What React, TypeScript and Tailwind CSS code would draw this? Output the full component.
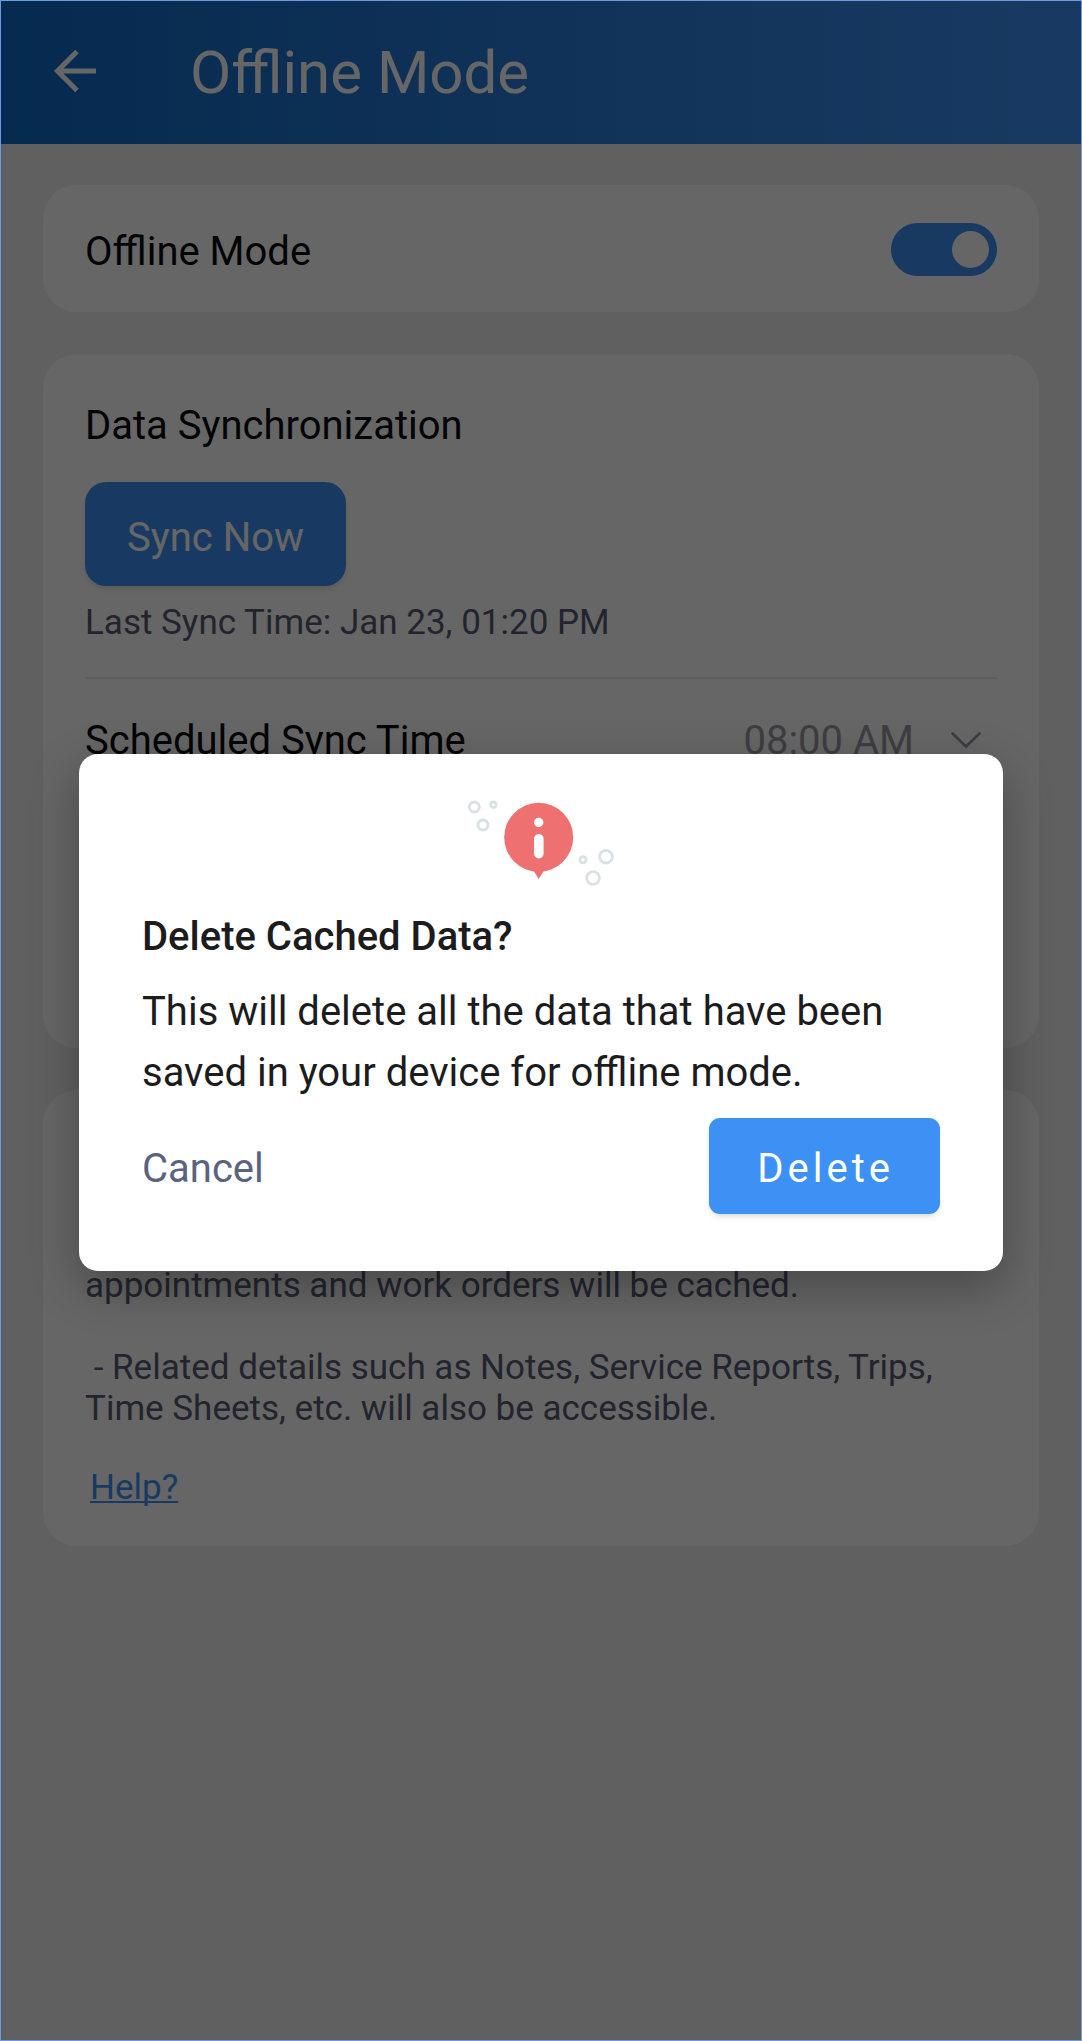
import React from "react";

function BackArrow() {
  return (
    <svg viewBox="0 0 44 44" className="size-11" fill="none" stroke="currentColor" strokeWidth="5" aria-hidden="true">
      <path d="M43 22H5M24 2.500L4.500 22L24 41.500" />
    </svg>
  );
}

function ChevronDown() {
  return (
    <svg viewBox="0 0 32 18" className="h-[18px] w-8" fill="none" stroke="currentColor" strokeWidth="2.800" strokeLinecap="round" aria-hidden="true">
      <path d="M2.500 1.500L16 14.500L29.500 1.500" />
    </svg>
  );
}

function InfoBubble() {
  return (
    <svg viewBox="28 20 146 86" className="h-[86px] w-[146px]" fill="none" aria-hidden="true">
      <g stroke="#dae1e5" strokeWidth="2.800">
        <circle cx="34.300" cy="27" r="5" />
        <circle cx="53.400" cy="24.700" r="2.700" />
        <circle cx="43" cy="45" r="5" />
        <circle cx="143" cy="79.700" r="3.100" />
        <circle cx="166" cy="76.700" r="6.400" />
        <circle cx="153" cy="98" r="6.400" />
      </g>
      <circle cx="98.700" cy="57.300" r="34.500" fill="#ee7070" />
      <path d="M93.500 90.500L98.700 99L103.900 90.500Z" fill="#ee7070" />
      <circle cx="98.700" cy="42.500" r="4.700" fill="#fff" />
      <rect x="94" y="54" width="9.600" height="24.500" rx="4.800" fill="#fff" />
    </svg>
  );
}

export default function App() {
  return (
    <div className="relative min-h-screen border border-[#6b9be0] bg-[#f1f1f1] font-['Roboto',sans-serif] text-[40px] leading-[48px] text-[#0a0a0f]">
      <header className="flex h-[143px] items-center gap-[93px] bg-linear-to-r from-[#0f6ac6] to-[#3e91f4] px-[52px] text-white">
        <button type="button" aria-label="Back" className="pb-1">
          <BackArrow />
        </button>
        <h1 className="text-[60px] leading-[68px]">Offline Mode</h1>
      </header>

      <main className="flex flex-col gap-[42px] px-[42px] py-[41px]">
        <section className="flex h-[127px] items-center justify-between rounded-[34px] bg-white px-[42px] pt-[2px]">
          <label htmlFor="offline" className="pt-1">Offline Mode</label>
          <input
            id="offline"
            type="checkbox"
            role="switch"
            defaultChecked
            className="flex h-[53px] w-[106px] appearance-none items-center rounded-full bg-gray-400 p-2 before:size-[37px] before:rounded-full before:bg-white checked:justify-end checked:bg-[#3e91f4]"
          />
        </section>

        <section className="rounded-[34px] bg-white px-[42px] pt-12 pb-[283px]">
          <h2>Data Synchronization</h2>
          <button type="button" className="mt-8 flex h-[104px] items-center rounded-[21px] bg-[#3e91f4] px-[42px] pt-2 text-white shadow-md">
            Sync Now
          </button>
          <p className="mt-4 text-[35px] leading-[41px] text-[#585b74]">Last Sync Time: Jan 23, 01:20 PM</p>
          <hr className="mt-[34px] border-t-2 border-[#e8e8ea]" />
          <div className="mt-[38px] flex items-center justify-between">
            <h2>Scheduled Sync Time</h2>
            <button type="button" className="flex items-center gap-9 pr-[15px] text-[#9c9ba6]">
              08:00 AM
              <ChevronDown />
            </button>
          </div>
        </section>

        <section className="rounded-[34px] bg-white px-[42px] pt-[175px] pb-[38px] text-[35px] leading-[41px] text-[#585b74]">
          <p>appointments and work orders will be cached.</p>
          <p className="mt-[41px] whitespace-pre-wrap">{" - Related details such as Notes, Service Reports, Trips, Time Sheets, etc. will also be accessible."}</p>
          <a href="#help" className="mt-[38px] ml-[5px] inline-block text-[#3e91f4] underline decoration-2 underline-offset-2 [text-decoration-skip-ink:none]">
            Help?
          </a>
        </section>
      </main>

      <div className="absolute inset-0 flex items-center justify-center bg-black/60 px-[78px] pb-4">
        <div role="dialog" aria-modal="true" aria-labelledby="dialog-title" className="w-full rounded-[19px] bg-white px-[63px] pt-[46px] pb-[57px] text-[#1c1c1e] shadow-[0_16px_48px_rgba(0,0,0,0.3)]">
          <div className="flex justify-center">
            <InfoBubble />
          </div>
          <h2 id="dialog-title" className="mt-[27px] font-medium">Delete Cached Data?</h2>
          <p className="mt-5 leading-[61px]">This will delete all the data that have been saved in your device for offline mode.</p>
          <div className="mt-[15px] flex items-center justify-between">
            <button type="button" className="pt-1.5 text-[#5a6480]">Cancel</button>
            <button type="button" className="h-24 rounded-[11px] bg-[#3e91f4] pt-1.5 pr-[46px] pl-12 tracking-widest text-white shadow-md">
              Delete
            </button>
          </div>
        </div>
      </div>
    </div>
  );
}
